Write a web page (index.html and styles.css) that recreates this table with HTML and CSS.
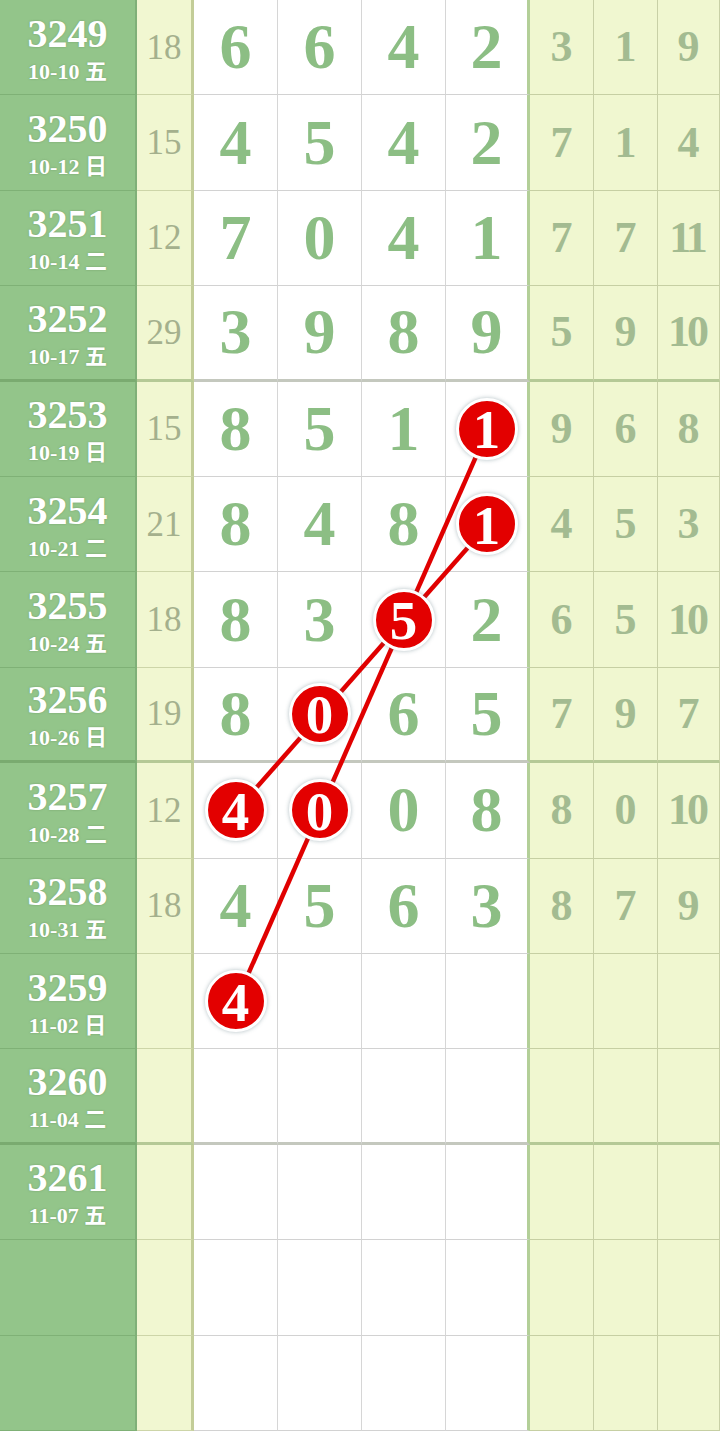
FILE: index.html
```html
<!DOCTYPE html>
<html lang="zh">
<head>
    <meta charset="UTF-8">
    <meta name="viewport" content="width=device-width, initial-scale=1.0">
    <title>走势图</title>
    <link rel="stylesheet" href="styles.css">
</head>
<body>
    <div class="chart" id="chart">
        <svg class="links" id="links" width="720" height="1431"></svg>
    </div>
    <script>
        // issue, date, sum, four digits (* = marked ball), three span values
        const rows = [
            ["3249", "10-10 五", "18", ["6", "6", "4", "2"], ["3", "1", "9"]],
            ["3250", "10-12 日", "15", ["4", "5", "4", "2"], ["7", "1", "4"]],
            ["3251", "10-14 二", "12", ["7", "0", "4", "1"], ["7", "7", "11"]],
            ["3252", "10-17 五", "29", ["3", "9", "8", "9"], ["5", "9", "10"]],
            ["3253", "10-19 日", "15", ["8", "5", "1", "1*"], ["9", "6", "8"]],
            ["3254", "10-21 二", "21", ["8", "4", "8", "1*"], ["4", "5", "3"]],
            ["3255", "10-24 五", "18", ["8", "3", "5*", "2"], ["6", "5", "10"]],
            ["3256", "10-26 日", "19", ["8", "0*", "6", "5"], ["7", "9", "7"]],
            ["3257", "10-28 二", "12", ["4*", "0*", "0", "8"], ["8", "0", "10"]],
            ["3258", "10-31 五", "18", ["4", "5", "6", "3"], ["8", "7", "9"]],
            ["3259", "11-02 日", "", ["4*", "", "", ""], ["", "", ""]],
            ["3260", "11-04 二", "", ["", "", "", ""], ["", "", ""]],
            ["3261", "11-07 五", "", ["", "", "", ""], ["", "", ""]],
            ["", "", "", ["", "", "", ""], ["", "", ""]],
            ["", "", "", ["", "", "", ""], ["", "", ""]]
        ];

        // ball chains: [row, digit column]
        const chains = [
            [[4, 3], [6, 2], [8, 1], [10, 0]],
            [[5, 3], [6, 2], [7, 1], [8, 0]]
        ];

        const chart = document.getElementById("chart");
        const rowEls = [];

        function cell(cls, text) {
            const el = document.createElement("div");
            el.className = "cell " + cls;
            if (text) el.textContent = text;
            return el;
        }

        rows.forEach((r, i) => {
            const row = document.createElement("div");
            row.className = "row" + (i % 4 === 3 ? " row-end" : "");

            const label = cell("cell-label", "");
            if (r[0]) {
                label.innerHTML = '<span class="issue">' + r[0] + '</span><span class="date">' + r[1] + '</span>';
            }
            row.appendChild(label);
            row.appendChild(cell("cell-sum", r[2]));

            r[3].forEach((d, j) => {
                const c = cell("cell-num" + (j === 3 ? " cell-num-last" : ""), "");
                if (d.endsWith("*")) {
                    const ball = document.createElement("span");
                    ball.className = "ball";
                    ball.textContent = d.slice(0, -1);
                    c.appendChild(ball);
                } else {
                    c.textContent = d;
                }
                row.appendChild(c);
            });

            r[4].forEach((d) => {
                const c = cell("cell-span", "");
                if (d) {
                    const s = document.createElement("span");
                    s.className = d.length > 1 ? "wide" : "";
                    s.textContent = d;
                    c.appendChild(s);
                }
                row.appendChild(c);
            });

            chart.appendChild(row);
            rowEls.push(row);
        });

        const svg = document.getElementById("links");
        const base = chart.getBoundingClientRect();

        function center(r, c) {
            const box = rowEls[r].children[c + 2].getBoundingClientRect();
            return [box.left - base.left + box.width / 2, box.top - base.top + box.height / 2];
        }

        chains.forEach((chain) => {
            for (let k = 0; k < chain.length - 1; k++) {
                const a = center(chain[k][0], chain[k][1]);
                const b = center(chain[k + 1][0], chain[k + 1][1]);
                const line = document.createElementNS("http://www.w3.org/2000/svg", "line");
                line.setAttribute("x1", a[0]);
                line.setAttribute("y1", a[1]);
                line.setAttribute("x2", b[0]);
                line.setAttribute("y2", b[1]);
                svg.appendChild(line);
            }
        });
    </script>
</body>
</html>
```

FILE: styles.css
```css
* {
    margin: 0;
    padding: 0;
    box-sizing: border-box;
}

body {
    width: 720px;
    height: 1431px;
    overflow: hidden;
    background: #fff;
    font-family: "Liberation Serif", "Noto Sans CJK SC", serif;
}

.chart {
    position: relative;
    display: grid;
    grid-template-rows: repeat(15, 1fr);
    width: 720px;
    height: 1431px;
}

.row {
    display: grid;
    grid-template-columns: 137px 57px 84px 84px 84px 84px 64px 64px 62px;
}

.cell {
    display: flex;
    align-items: center;
    justify-content: center;
    line-height: 1;
    font-weight: bold;
}

.cell-label {
    flex-direction: column;
    gap: 7px;
    background: #93c58a;
    border-bottom: 1px solid #7fb176;
    border-right: 2px solid #80b078;
    color: #fff;
    padding-top: 2px;
}

.issue {
    font-size: 40px;
    text-shadow: 0 0 2px rgba(90, 130, 80, 0.6);
}

.date {
    font-size: 22px;
    text-shadow: 0 0 2px rgba(90, 130, 80, 0.6);
}

.cell-sum {
    background: #f1f7d1;
    border-bottom: 1px solid #cdd5a8;
    border-right: 3px solid #c3cd98;
    color: #a4b08d;
    font-size: 35px;
    font-weight: normal;
}

.cell-num {
    background: #fff;
    border-bottom: 1px solid #d2d2d2;
    border-right: 1px solid #d6d6d6;
    color: #8cbe84;
    font-size: 64px;
}

.cell-num-last {
    border-right: 3px solid #b3cf98;
}

.cell-span {
    background: #f0f7d0;
    border-bottom: 1px solid #c6cfa3;
    border-right: 1px solid #c8d0a6;
    color: #a3bb91;
    font-size: 44px;
}

.cell-span .wide {
    letter-spacing: -3px;
    margin-left: -3px;
}

.row-end .cell {
    border-bottom-width: 3px;
}

.row-end .cell-label {
    border-bottom-color: #7aab70;
}

.row-end .cell-sum,
.row-end .cell-span {
    border-bottom-color: #b5c996;
}

.row-end .cell-num {
    border-bottom-color: #c4c8be;
}

.ball {
    position: relative;
    z-index: 2;
    display: flex;
    align-items: center;
    justify-content: center;
    width: 62px;
    height: 62px;
    border-radius: 50%;
    background: #e30000;
    border: 3px solid #fff;
    box-shadow: 0 0 4px rgba(80, 110, 120, 0.45);
    color: #fff;
    font-size: 55px;
    padding-top: 2px;
}

.links {
    position: absolute;
    left: 0;
    top: 0;
    z-index: 1;
    pointer-events: none;
}

.links line {
    stroke: #e00000;
    stroke-width: 4.5;
}
```
